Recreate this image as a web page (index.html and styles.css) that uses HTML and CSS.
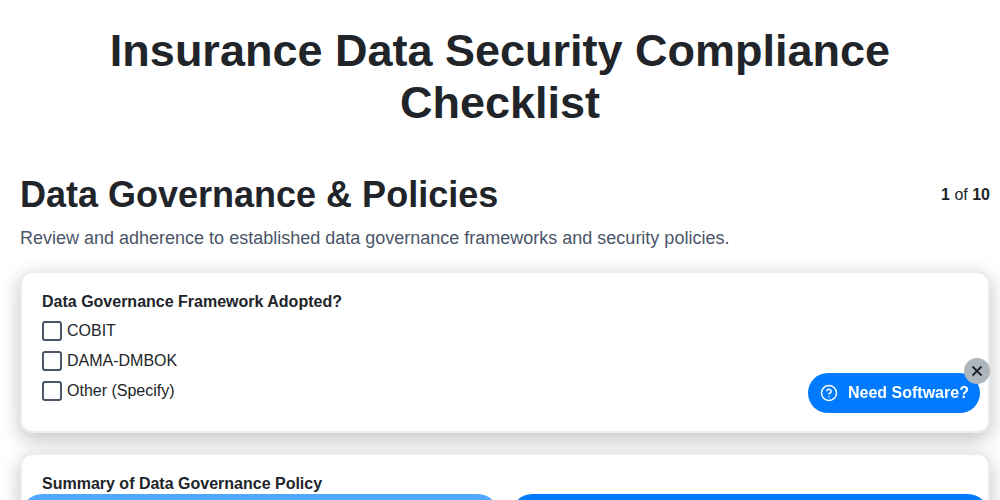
FILE: index.html
```html
<!DOCTYPE html>
<html lang="en">
<head>
<meta charset="utf-8">
<title>Insurance Data Security Compliance Checklist</title>
<link rel="stylesheet" href="styles.css">
</head>
<body>
<main class="page">
  <h1 class="title">Insurance Data Security Compliance Checklist</h1>
  <div class="section-head">
    <h2 class="section-title">Data Governance &amp; Policies</h2>
    <div class="progress"><b>1</b> of <b>10</b></div>
  </div>
  <p class="section-desc">Review and adherence to established data governance frameworks and security policies.</p>
  <section class="card">
    <div class="card-label">Data Governance Framework Adopted?</div>
    <label class="option"><span class="box"></span>COBIT</label>
    <label class="option"><span class="box"></span>DAMA-DMBOK</label>
    <label class="option"><span class="box"></span>Other (Specify)</label>
  </section>
  <section class="card">
    <div class="card-label">Summary of Data Governance Policy</div>
  </section>
</main>
<div class="actions">
  <button class="action action-light" type="button"></button>
  <button class="action action-primary" type="button"></button>
</div>
<div class="promo">
  <svg class="promo-icon" viewBox="0 0 24 24" width="18" height="18" fill="none" stroke="#fff" stroke-width="2" stroke-linecap="round" stroke-linejoin="round"><circle cx="12" cy="12" r="10"/><path d="M9.1 9a3 3 0 0 1 5.8 1c0 2-3 3-3 3"/><path d="M12 17h.01"/></svg>
  <span>Need Software?</span>
  <span class="promo-close"><svg viewBox="0 0 12 12" width="12" height="12" fill="none" stroke="#212529" stroke-width="1.800"><path d="M1.500 1.500l9 9M10.500 1.500l-9 9"/></svg></span>
</div>
</body>
</html>
```
FILE: styles.css
```css
* { box-sizing: border-box; }
html, body { height: 500px; overflow: hidden; }
body {
  margin: 0;
  background: #fff;
  color: #212529;
  font-family: "Liberation Sans", Arial, sans-serif;
}
.page { padding: 25px 10px 0 20px; }
.title {
  margin: 0 0 44px;
  padding-right: 10px;
  text-align: center;
  font-size: 45px;
  line-height: 52px;
  font-weight: 700;
}
.section-head {
  display: flex;
  justify-content: space-between;
  align-items: center;
}
.section-title {
  margin: 0;
  font-size: 36px;
  line-height: 44px;
  font-weight: 700;
}
.progress { font-size: 16px; }
.section-desc {
  margin: 9px 0 21px;
  font-size: 18px;
  line-height: 24px;
  color: #4a5568;
}
.card {
  margin: 0 0 20px;
  padding: 20px;
  height: 162px;
  background: #fff;
  border: 2px solid #ebebf2;
  border-radius: 12px;
  box-shadow: 0 6px 20px rgba(0, 0, 0, 0.25);
}
.card-label {
  font-size: 16px;
  line-height: 18px;
  font-weight: 700;
  margin-bottom: 10px;
}
.option {
  display: flex;
  align-items: center;
  gap: 5px;
  height: 20px;
  margin-bottom: 10px;
  font-size: 16px;
}
.box {
  width: 20px;
  height: 20px;
  border: 2px solid #4a5568;
  border-radius: 3px;
  background: #fff;
}
.actions {
  position: fixed;
  left: 22px;
  right: 12px;
  top: 494px;
  display: flex;
  gap: 14px;
}
.action {
  flex: 1;
  height: 40px;
  border: 0;
  border-radius: 20px;
}
.action-light { background: #52a8ff; }
.action-primary { background: #007bff; }
.promo {
  position: fixed;
  left: 808px;
  top: 373px;
  width: 172px;
  height: 40px;
  padding-left: 12px;
  display: flex;
  align-items: center;
  gap: 10px;
  background: #007bff;
  color: #fff;
  border-radius: 20px;
  font-size: 16px;
  font-weight: 700;
}
.promo-icon { flex: none; }
.promo-close {
  position: absolute;
  top: -15px;
  right: -10px;
  width: 26px;
  height: 26px;
  border-radius: 50%;
  background: #adb5bd;
  display: flex;
  align-items: center;
  justify-content: center;
}
```
